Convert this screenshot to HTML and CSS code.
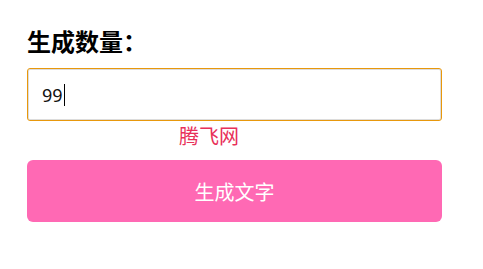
FILE: index.html
```html
<!DOCTYPE html>
<html lang="zh">
<head>
<meta charset="utf-8">
<title>生成文字</title>
<link rel="stylesheet" href="styles.css">
</head>
<body>
<div class="form">
  <label class="label" for="count">生成数量：</label>
  <div class="field"><span class="value">99</span><span class="caret"></span></div>
  <div class="brand">腾飞网</div>
  <button class="btn" type="button">生成文字</button>
</div>
</body>
</html>
```
FILE: styles.css
```css
html, body {
  margin: 0;
  padding: 0;
  background: #fff;
}
body {
  font-family: "Noto Sans CJK SC", "Noto Sans", sans-serif;
}
.form {
  width: 415px;
  padding: 23px 0 0 27px;
  display: flex;
  flex-direction: column;
}
.label {
  font-size: 24px;
  font-weight: bold;
  line-height: 35px;
  height: 35px;
  color: #000;
  margin-bottom: 10px;
}
.field {
  height: 53px;
  box-sizing: border-box;
  border: 1px solid #e8980c;
  border-radius: 3px;
  box-shadow: inset 0 0 0 1px #dcdcdc;
  display: flex;
  align-items: center;
  padding-left: 14px;
  font-family: "Noto Sans", "Noto Sans CJK SC", sans-serif;
  font-size: 18px;
  color: #111;
}
.caret {
  display: inline-block;
  width: 1px;
  height: 22px;
  background: #000;
  margin-left: 1px;
}
.brand {
  padding-left: 152px;
  font-size: 20px;
  line-height: 29px;
  height: 29px;
  color: #e8305a;
  margin-bottom: 10px;
}
.btn {
  height: 62px;
  width: 415px;
  border: none;
  border-radius: 6px;
  background: #ff69b4;
  color: #fff;
  font-family: "Noto Sans CJK SC", sans-serif;
  font-size: 20px;
  padding: 0;
}
```
